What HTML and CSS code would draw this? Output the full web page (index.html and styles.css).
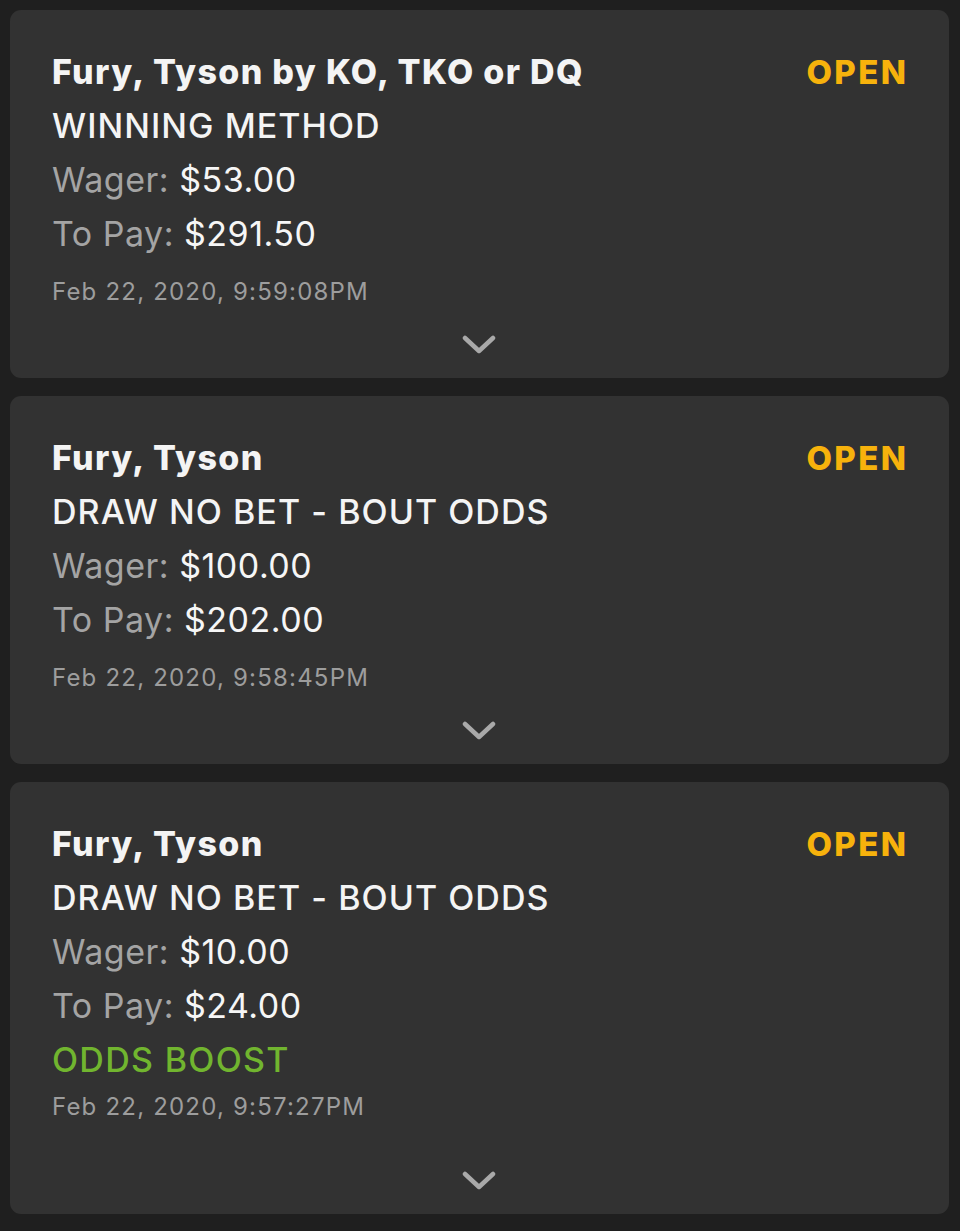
FILE: index.html
```html
<!DOCTYPE html>
<html lang="en">
<head>
<meta charset="utf-8">
<title>My Bets</title>
<link rel="stylesheet" href="styles.css">
</head>
<body>
<main class="list">
  <article class="bet">
    <div class="bet-head">
      <div class="title">Fury, Tyson by KO, TKO or DQ</div>
      <div class="status">OPEN</div>
    </div>
    <div class="market">WINNING METHOD</div>
    <div class="row"><span class="label">Wager:</span> <span class="val">$53.00</span></div>
    <div class="row"><span class="label">To Pay:</span> <span class="val">$291.50</span></div>
    <div class="date">Feb 22, 2020, 9:59:08PM</div>
    <div class="chev"><svg width="34" height="20" viewBox="0 0 34 20"><polyline points="3,3 17,16 31,3" fill="none" stroke="#a9a9a9" stroke-width="4.5" stroke-linecap="round" stroke-linejoin="round"/></svg></div>
  </article>
  <article class="bet">
    <div class="bet-head">
      <div class="title">Fury, Tyson</div>
      <div class="status">OPEN</div>
    </div>
    <div class="market">DRAW NO BET - BOUT ODDS</div>
    <div class="row"><span class="label">Wager:</span> <span class="val">$100.00</span></div>
    <div class="row"><span class="label">To Pay:</span> <span class="val">$202.00</span></div>
    <div class="date">Feb 22, 2020, 9:58:45PM</div>
    <div class="chev"><svg width="34" height="20" viewBox="0 0 34 20"><polyline points="3,3 17,16 31,3" fill="none" stroke="#a9a9a9" stroke-width="4.5" stroke-linecap="round" stroke-linejoin="round"/></svg></div>
  </article>
  <article class="bet boosted">
    <div class="bet-head">
      <div class="title">Fury, Tyson</div>
      <div class="status">OPEN</div>
    </div>
    <div class="market">DRAW NO BET - BOUT ODDS</div>
    <div class="row"><span class="label">Wager:</span> <span class="val">$10.00</span></div>
    <div class="row"><span class="label">To Pay:</span> <span class="val">$24.00</span></div>
    <div class="boost">ODDS BOOST</div>
    <div class="date">Feb 22, 2020, 9:57:27PM</div>
    <div class="chev"><svg width="34" height="20" viewBox="0 0 34 20"><polyline points="3,3 17,16 31,3" fill="none" stroke="#a9a9a9" stroke-width="4.5" stroke-linecap="round" stroke-linejoin="round"/></svg></div>
  </article>
</main>
</body>
</html>
```
FILE: styles.css
```css
html, body {
  margin: 0;
  padding: 0;
  background: #1f1f1f;
}
body {
  font-family: Inter, "Open Sans", "Liberation Sans", sans-serif;
  color: #f4f4f4;
}
.list {
  display: flex;
  flex-direction: column;
  gap: 18px;
  padding: 10px 11px 17px 10px;
}
.bet {
  background: #323232;
  border-radius: 11px;
  padding: 35px 43px 23px 42px;
  display: flex;
  flex-direction: column;
}
.bet-head {
  display: flex;
  justify-content: space-between;
  align-items: center;
}
.title {
  font-weight: 800;
  font-size: 34px;
  line-height: 54px;
  letter-spacing: 1.33px;
}
.status {
  font-weight: 800;
  font-size: 33px;
  line-height: 54px;
  letter-spacing: 2.4px;
  margin-right: -2.4px;
  color: #f7b20c;
}
.market {
  font-weight: 500;
  font-size: 34px;
  line-height: 54px;
  letter-spacing: 1.05px;
}
.row {
  font-size: 34px;
  line-height: 54px;
  letter-spacing: 0.5px;
}
.label {
  color: #a4a4a4;
}
.val {
  color: #f6f6f6;
}
.boost {
  font-weight: 500;
  font-size: 34px;
  line-height: 54px;
  letter-spacing: 1.3px;
  color: #71b52f;
}
.date {
  font-size: 24px;
  line-height: 40px;
  letter-spacing: 1.2px;
  color: #9d9d9d;
  margin-top: 11px;
}
.boost + .date {
  margin-top: 0;
}
.chev {
  display: flex;
  justify-content: center;
  margin-top: 23px;
  height: 20px;
}
.boosted .chev {
  margin-top: 44px;
}
```
